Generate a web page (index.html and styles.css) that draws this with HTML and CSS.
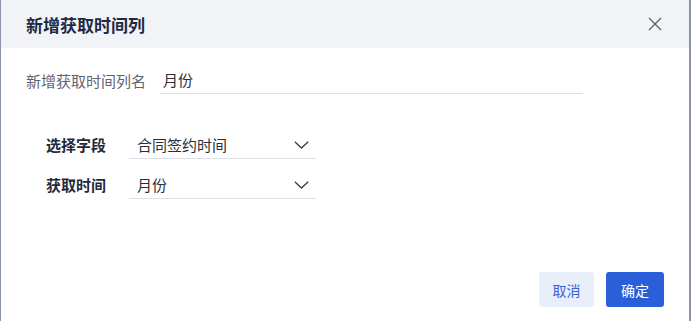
FILE: index.html
```html
<!DOCTYPE html>
<html lang="zh">
<head>
<meta charset="utf-8">
<title>新增获取时间列</title>
<link rel="stylesheet" href="styles.css">
</head>
<body>
<div class="dialog">
  <div class="header">
    <div class="title">新增获取时间列</div>
    <button class="close" aria-label="关闭">
      <svg width="14" height="14" viewBox="0 0 14 14"><path d="M1 1L13 13M13 1L1 13" stroke="#5a5e66" stroke-width="1.3" fill="none"/></svg>
    </button>
  </div>
  <div class="body">
    <div class="name-row">
      <label class="name-label">新增获取时间列名</label>
      <div class="name-input">月份</div>
    </div>
    <div class="group">
      <div class="row">
        <label class="row-label">选择字段</label>
        <div class="select">
          <span>合同签约时间</span>
          <svg class="chev" width="15" height="8" viewBox="0 0 15 8"><path d="M0.8 0.8L7.5 7L14.2 0.8" stroke="#3a3f4a" stroke-width="1.3" fill="none"/></svg>
        </div>
      </div>
      <div class="row">
        <label class="row-label">获取时间</label>
        <div class="select">
          <span>月份</span>
          <svg class="chev" width="15" height="8" viewBox="0 0 15 8"><path d="M0.8 0.8L7.5 7L14.2 0.8" stroke="#3a3f4a" stroke-width="1.3" fill="none"/></svg>
        </div>
      </div>
    </div>
  </div>
  <div class="footer">
    <button class="btn btn-cancel">取消</button>
    <button class="btn btn-ok">确定</button>
  </div>
</div>
</body>
</html>
```

FILE: styles.css
```css
* { box-sizing: border-box; }
html, body { margin: 0; padding: 0; background: #fff; }
body {
  font-family: "Noto Sans CJK SC", "Noto Sans", sans-serif;
}
.dialog {
  width: 691px;
  height: 321px;
  border-left: 1px solid #8a93a6;
  border-right: 2px solid #8a93a6;
  display: flex;
  flex-direction: column;
  background: #fff;
}
.header {
  height: 48px;
  flex: none;
  background: #f2f3f7;
  display: flex;
  align-items: center;
  justify-content: space-between;
  padding: 0 27px 0 25px;
}
.title {
  font-size: 17px;
  font-weight: 700;
  color: #1f2a44;
  line-height: 24px;
  padding-top: 1px;
}
.close {
  border: 0;
  background: none;
  padding: 0;
  width: 14px;
  height: 14px;
  display: flex;
  cursor: pointer;
}
.body {
  padding: 18px 0 0 25px;
}
.name-row {
  display: flex;
  align-items: center;
}
.name-label {
  font-size: 15px;
  color: #5f6472;
  width: 134px;
  line-height: 20px;
  padding-top: 1px;
}
.name-input {
  width: 423px;
  height: 28px;
  line-height: 28px;
  border-bottom: 1px solid #dcdfe6;
  font-size: 15px;
  color: #2b2f38;
  padding-left: 3px;
}
.group {
  margin-top: 37px;
  padding-left: 20px;
  display: flex;
  flex-direction: column;
  gap: 12px;
}
.row {
  display: flex;
  align-items: center;
}
.row-label {
  width: 83px;
  font-size: 15px;
  font-weight: 700;
  color: #1f2a3d;
  line-height: 20px;
}
.select {
  width: 187px;
  height: 28px;
  border-bottom: 1px solid #dcdfe6;
  display: flex;
  align-items: center;
  justify-content: space-between;
  padding: 0 7px 0 8px;
  font-size: 15px;
  color: #2b2f38;
}
.chev { flex: none; }
.footer {
  margin-top: auto;
  display: flex;
  justify-content: flex-end;
  gap: 12px;
  padding: 0 25px 14px 0;
}
.btn {
  height: 35px;
  border: 0;
  border-radius: 3px;
  font-family: inherit;
  font-size: 14px;
  padding: 0;
  cursor: pointer;
}
.btn-cancel {
  width: 55px;
  background: #e8eefa;
  color: #3a62d4;
}
.btn-ok {
  width: 58px;
  background: #2b5fd9;
  color: #fff;
}
```
